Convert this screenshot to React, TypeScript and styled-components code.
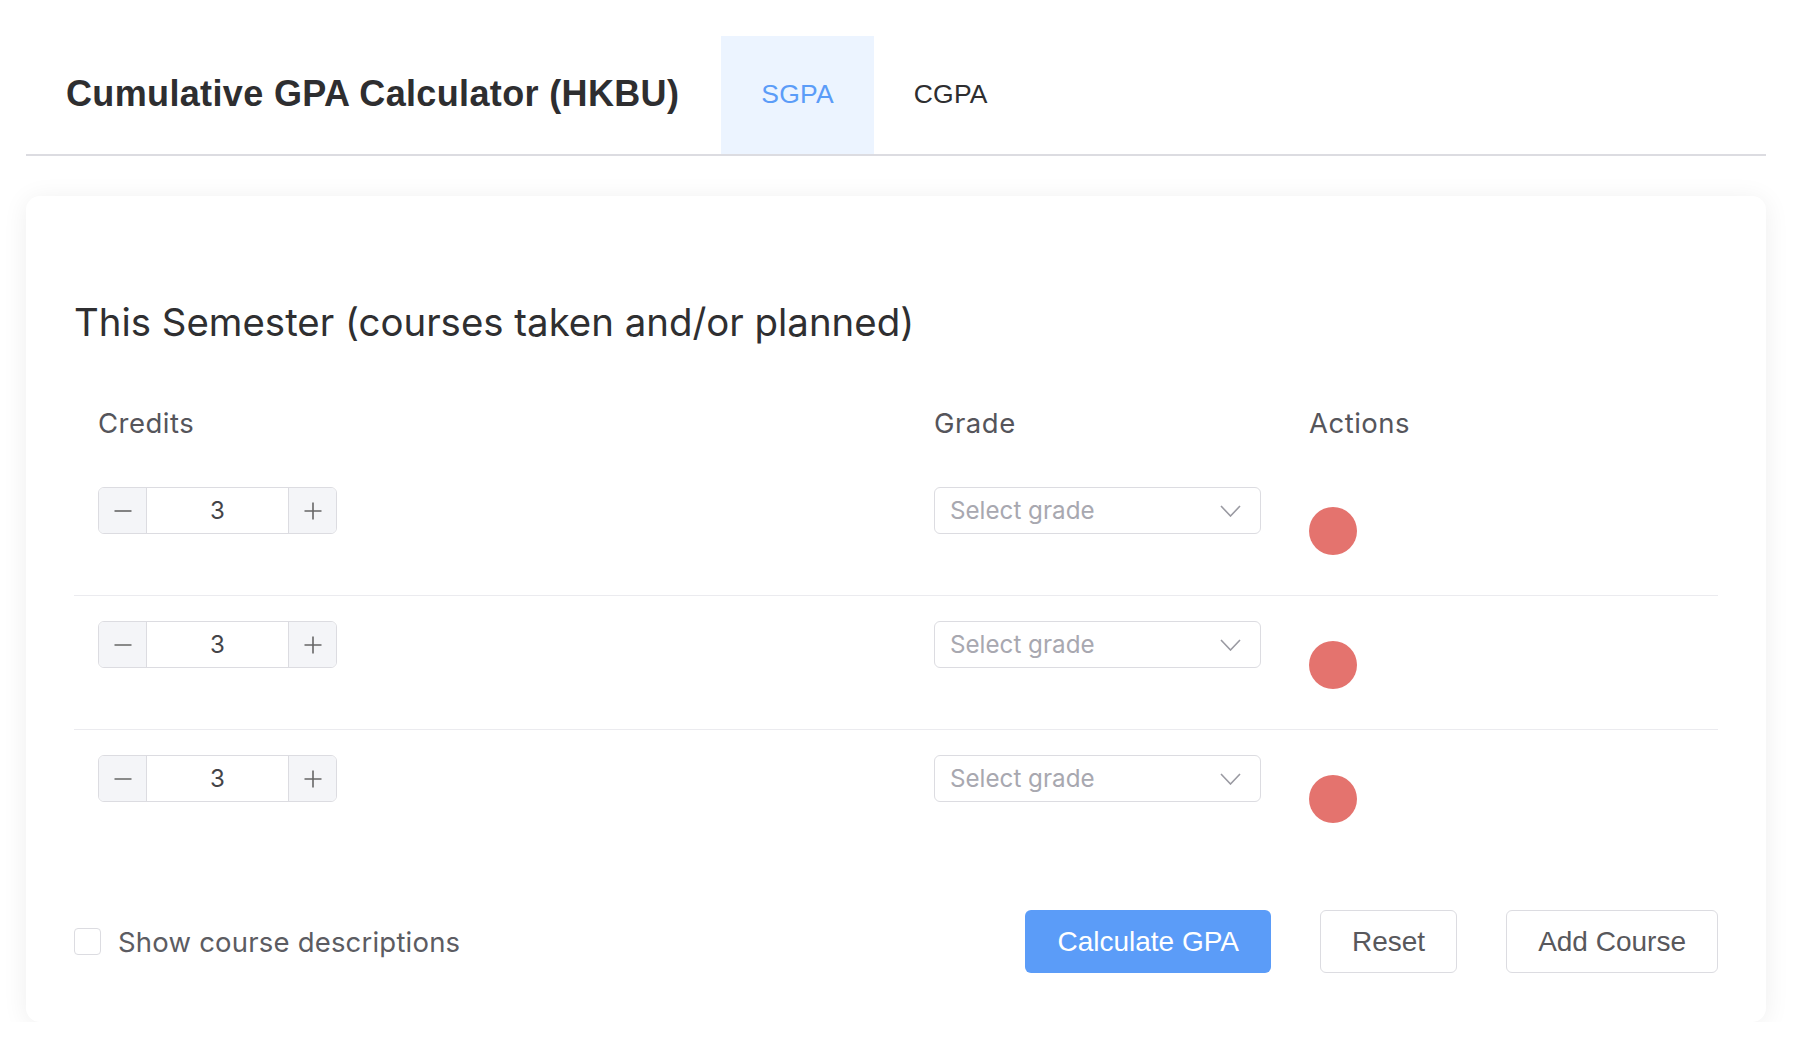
import React, { useState } from "react";
import styled, { createGlobalStyle } from "styled-components";

const GlobalStyle = createGlobalStyle`
  html, body { margin: 0; padding: 0; background: #ffffff; }
  body { font-family: Inter, "Noto Sans", sans-serif; }
  * { box-sizing: border-box; }
`;

const Page = styled.div`
  padding: 36px 32px 0 26px;
  width: 1798px;
`;

const Header = styled.header`
  display: flex;
  align-items: stretch;
  height: 120px;
  border-bottom: 2px solid #dcdce1;
`;

const Title = styled.h1`
  margin: 0;
  padding: 0 42px 2px 40px;
  display: flex;
  align-items: center;
  font-family: "Liberation Sans", Arial, sans-serif;
  font-weight: 700;
  font-size: 36px;
  color: #2e2e30;
  letter-spacing: 0.35px;
`;

const Tab = styled.button<{ $active?: boolean }>`
  border: none;
  margin: 0;
  padding: 0 40px 2px;
  background: ${(p) => (p.$active ? "#ecf4ff" : "transparent")};
  color: ${(p) => (p.$active ? "#5b9cf8" : "#2e2e30")};
  font-family: "Liberation Sans", Arial, sans-serif;
  font-size: 26.5px;
  letter-spacing: 0.2px;
  cursor: pointer;
`;

const Card = styled.section`
  margin-top: 40px;
  background: #ffffff;
  border-radius: 14px;
  box-shadow: 0 3px 26px rgba(0, 0, 0, 0.07);
  padding: 48px 48px 49px;
`;

const Heading = styled.h2`
  margin: 55px 0 0 0;
  font-family: Inter, sans-serif;
  font-weight: 400;
  font-size: 38.4px;
  line-height: 46px;
  color: #2f2f31;
`;

const Grid = styled.div`
  display: grid;
  grid-template-columns: 836px 375px 1fr;
  align-items: start;
`;

const HeadRow = styled(Grid)`
  margin-top: 58px;
  padding-bottom: 19px;
`;

const HeadCell = styled.div`
  padding-left: 24px;
  font-family: Inter, sans-serif;
  font-weight: 400;
  font-size: 27.5px;
  letter-spacing: 0.5px;
  line-height: 40px;
  color: #55555b;
`;

const Row = styled(Grid)<{ $last?: boolean }>`
  padding: 25px 0 40px;
  border-bottom: ${(p) => (p.$last ? "none" : "1px solid #ebebef")};
  ${(p) => (p.$last ? "padding-bottom: 41px;" : "")}
`;

const Cell = styled.div<{ $top?: number }>`
  padding-left: 24px;
  padding-top: ${(p) => p.$top ?? 0}px;
`;

const Stepper = styled.div`
  display: flex;
  width: 239px;
  height: 47px;
  border: 1.5px solid #dcdce1;
  border-radius: 6px;
  overflow: hidden;
`;

const StepButton = styled.button`
  width: 48px;
  flex: none;
  border: none;
  margin: 0;
  padding: 0;
  background: #f4f5f8;
  display: flex;
  align-items: center;
  justify-content: center;
  cursor: pointer;
  &:first-child { border-right: 1.5px solid #dcdce1; }
  &:last-child { border-left: 1.5px solid #dcdce1; }
`;

const StepValue = styled.div`
  flex: 1;
  display: flex;
  align-items: center;
  justify-content: center;
  font-family: Inter, sans-serif;
  font-size: 24px;
  color: #444448;
`;

const Select = styled.div`
  width: 327px;
  height: 47px;
  border: 1.5px solid #dcdce1;
  border-radius: 6px;
  display: flex;
  align-items: center;
  justify-content: space-between;
  padding: 0 19px 0 15px;
  font-family: Inter, sans-serif;
  font-size: 24.2px;
  color: #a8a8b0;
`;

const DeleteDot = styled.button`
  width: 48px;
  height: 48px;
  border-radius: 50%;
  border: none;
  padding: 0;
  background: #e4736e;
  display: block;
  cursor: pointer;
`;

const Footer = styled.div`
  margin-top: 46px;
  display: flex;
  align-items: center;
  justify-content: space-between;
`;

const CheckLabel = styled.label`
  display: flex;
  align-items: center;
  gap: 17px;
  font-family: Inter, sans-serif;
  font-size: 27.5px;
  letter-spacing: 0.2px;
  color: #5c5c62;
  cursor: pointer;
`;

const CheckBox = styled.span`
  width: 27px;
  height: 27px;
  border: 1.5px solid #dcdce1;
  border-radius: 4px;
  background: #fff;
`;

const Actions = styled.div`
  display: flex;
  gap: 49px;
`;

const Button = styled.button<{ $primary?: boolean }>`
  height: 63px;
  padding: 0 ${(p) => (p.$primary ? 32 : 31)}px;
  border-radius: 6px;
  font-family: "Liberation Sans", Arial, sans-serif;
  font-size: 28px;
  cursor: pointer;
  border: ${(p) => (p.$primary ? "none" : "1.5px solid #dcdce1")};
  background: ${(p) => (p.$primary ? "#5b9cf8" : "#ffffff")};
  color: ${(p) => (p.$primary ? "#ffffff" : "#58585c")};
`;

const Minus = () => (
  <svg width="18" height="18" viewBox="0 0 18 18">
    <path d="M0.5 9h17" stroke="#666" strokeWidth="1.6" />
  </svg>
);

const Plus = () => (
  <svg width="18" height="18" viewBox="0 0 18 18">
    <path d="M0.5 9h17M9 0.5v17" stroke="#666" strokeWidth="1.6" />
  </svg>
);

const Chevron = () => (
  <svg width="21" height="12" viewBox="0 0 21 12">
    <path d="M1 1l9.5 10L20 1" fill="none" stroke="#9a9aa2" strokeWidth="1.6" />
  </svg>
);

export default function App() {
  const [rows] = useState([3, 3, 3]);
  return (
    <>
      <GlobalStyle />
      <Page>
        <Header>
          <Title>Cumulative GPA Calculator (HKBU)</Title>
          <Tab $active>SGPA</Tab>
          <Tab>CGPA</Tab>
        </Header>
        <Card>
          <Heading>This Semester (courses taken and/or planned)</Heading>
          <HeadRow>
            <HeadCell>Credits</HeadCell>
            <HeadCell>Grade</HeadCell>
            <HeadCell>Actions</HeadCell>
          </HeadRow>
          {rows.map((credits, i) => (
            <Row key={i} $last={i === rows.length - 1}>
              <Cell>
                <Stepper>
                  <StepButton aria-label="decrease"><Minus /></StepButton>
                  <StepValue>{credits}</StepValue>
                  <StepButton aria-label="increase"><Plus /></StepButton>
                </Stepper>
              </Cell>
              <Cell>
                <Select>
                  <span>Select grade</span>
                  <Chevron />
                </Select>
              </Cell>
              <Cell $top={20}>
                <DeleteDot aria-label="remove" />
              </Cell>
            </Row>
          ))}
          <Footer>
            <CheckLabel>
              <CheckBox />
              Show course descriptions
            </CheckLabel>
            <Actions>
              <Button $primary>Calculate GPA</Button>
              <Button>Reset</Button>
              <Button>Add Course</Button>
            </Actions>
          </Footer>
        </Card>
      </Page>
    </>
  );
}
